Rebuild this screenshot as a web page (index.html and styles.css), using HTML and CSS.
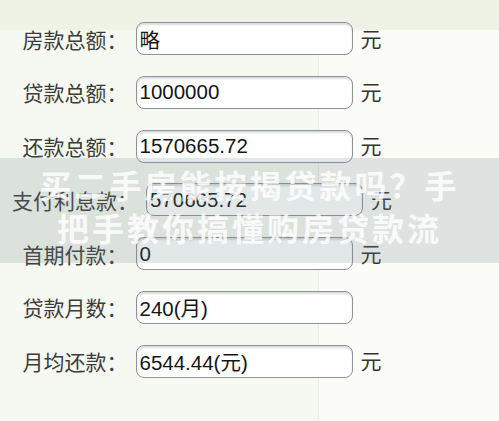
FILE: index.html
```html
<!DOCTYPE html>
<html lang="zh">
<head>
<meta charset="utf-8">
<link rel="stylesheet" href="styles.css">
</head>
<body>
<div class="page">
  <div class="form">
    <div class="row"><span class="label">房款总额：</span><div class="field">略</div><span class="unit">元</span></div>
    <div class="row"><span class="label">贷款总额：</span><div class="field">1000000</div><span class="unit">元</span></div>
    <div class="row"><span class="label">还款总额：</span><div class="field">1570665.72</div><span class="unit">元</span></div>
    <div class="row"><span class="label">支付利息款：</span><div class="field">570665.72</div><span class="unit">元</span></div>
    <div class="row"><span class="label">首期付款：</span><div class="field">0</div><span class="unit">元</span></div>
    <div class="row"><span class="label">贷款月数：</span><div class="field">240(月)</div><span class="unit unit-hidden">元</span></div>
    <div class="row"><span class="label">月均还款：</span><div class="field">6544.44(元)</div><span class="unit">元</span></div>
  </div>
  <div class="banner">
    <div class="banner-line">买二手房能按揭贷款吗？手</div>
    <div class="banner-line">把手教你搞懂购房贷款流</div>
  </div>
</div>
</body>
</html>
```
FILE: styles.css
```css
html, body {
  margin: 0;
  padding: 0;
}
body {
  width: 499px;
  height: 421px;
  overflow: hidden;
  background: #fbfbf8;
  font-family: "Noto Sans CJK SC", sans-serif;
}
.page {
  position: relative;
  width: 499px;
  height: 421px;
  background:
    linear-gradient(to bottom, #eef3e6 0, #eef3e6 30px, transparent 30px),
    linear-gradient(to right, #f6f9f1 0, #f6f9f1 318px, #e9eee2 318px, #e9eee2 319px, #fbfbf8 319px);
}
.form {
  width: 404px;
  padding-top: 22px;
  display: flex;
  flex-direction: column;
  align-items: center;
  gap: 20.8px;
}
.row {
  display: flex;
  align-items: center;
  gap: 8px;
  height: 33px;
}
.label {
  font-size: 21px;
  color: #3c3c3c;
  white-space: nowrap;
}
.field {
  box-sizing: border-box;
  width: 217px;
  height: 33px;
  border: 1.5px solid #8d929b;
  border-radius: 8px;
  background: #fff;
  box-shadow: inset 0 2px 2px rgba(0, 0, 0, 0.14);
  padding: 0 3px;
  display: flex;
  align-items: center;
  font-family: "Liberation Sans", "Noto Sans CJK SC", sans-serif;
  font-size: 20.5px;
  color: #151515;
  white-space: nowrap;
  overflow: hidden;
}
.unit {
  font-size: 21px;
  color: #333;
  margin-top: -2px;
}
.unit-hidden {
  visibility: hidden;
}
.banner {
  position: absolute;
  left: 0;
  top: 158px;
  width: 499px;
  height: 105px;
  background: rgba(110, 135, 135, 0.2);
  box-sizing: border-box;
  padding-top: 5px;
  text-align: center;
}
.banner-line {
  font-size: 32px;
  line-height: 43px;
  font-weight: 700;
  letter-spacing: 3px;
  color: rgba(255, 255, 255, 0.82);
  white-space: nowrap;
}
```
